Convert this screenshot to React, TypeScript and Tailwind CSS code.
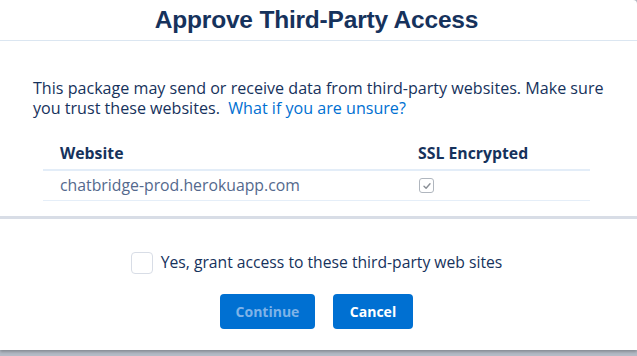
import React, { useState } from "react";

export default function App() {
  const [granted, setGranted] = useState(false);

  return (
    <div className="w-[637px] h-[356px] bg-[#b4bbc6] overflow-hidden" style={{ fontFamily: '"Open Sans", "Liberation Sans", sans-serif' }}>
      <div className="h-[350px] bg-white rounded-tr-[4px] flex flex-col shadow-[0_2px_3px_rgba(0,0,0,0.25)]">
        {/* header */}
        <div className="h-[41px] border-b border-[#dbe6f1] flex items-center justify-center pr-[4px]">
          <h1 className="text-[24.5px] font-bold text-[#16325c] tracking-[-0.2px] leading-none" style={{ fontFamily: '"Liberation Sans", Arial, sans-serif' }}>
            Approve Third-Party Access
          </h1>
        </div>

        {/* body */}
        <div className="pt-[37px] px-[33px]">
          <p className="text-[16.1px] leading-[20px] text-[#16325c]">
            This package may send or receive data from third-party websites. Make sure you trust these websites.{"\u00a0 "}
            <a href="#" className="text-[#0070d2]">What if you are unsure?</a>
          </p>
        </div>

        <div className="mt-[21px] ml-[43px] mr-[47px]">
          <div className="flex items-center h-[32px] border-b-2 border-[#e3edf8] text-[15.8px] font-bold text-[#16325c]">
            <div className="pl-[17px] w-[375px]">Website</div>
            <div>SSL Encrypted</div>
          </div>
          <div className="flex items-center h-[30px] border-b border-[#e5eef8] text-[15.8px] text-[#54698d]">
            <div className="pl-[17px] w-[375px]">chatbridge-prod.herokuapp.com</div>
            <div>
              <div className="w-[15px] h-[15px] rounded-[3px] border border-[#b0b6be] flex items-center justify-center ml-[1px]">
                <svg width="10" height="10" viewBox="0 0 10 10" fill="none">
                  <path d="M2 5.2 L4.1 7.3 L8 2.8" stroke="#8a8f96" strokeWidth="1.4" strokeLinecap="round" strokeLinejoin="round" />
                </svg>
              </div>
            </div>
          </div>
        </div>

        <div className="mt-[15px] h-[3px] bg-[#d8dde6]" />

        {/* footer */}
        <div className="flex flex-col items-center pt-[32px] pr-[4px]">
          <label className="flex items-center gap-[8px] cursor-pointer">
            <button
              onClick={() => setGranted(!granted)}
              className="w-[22px] h-[22px] rounded-[4px] border border-[#d8dde6] bg-white"
            />
            <span className="text-[15.7px] text-[#16325c]">Yes, grant access to these third-party web sites</span>
          </label>
          <div className="flex gap-[18px] mt-[19px]">
            <button
              disabled={!granted}
              className={`w-[95px] h-[35px] rounded-[4px] bg-[#0070d2] text-[14px] font-bold ${granted ? "text-white" : "text-[#7fb3e8]"}`}
            >
              Continue
            </button>
            <button className="w-[80px] h-[35px] rounded-[4px] bg-[#0070d2] text-white text-[14px] font-bold">
              Cancel
            </button>
          </div>
        </div>
      </div>
    </div>
  );
}
